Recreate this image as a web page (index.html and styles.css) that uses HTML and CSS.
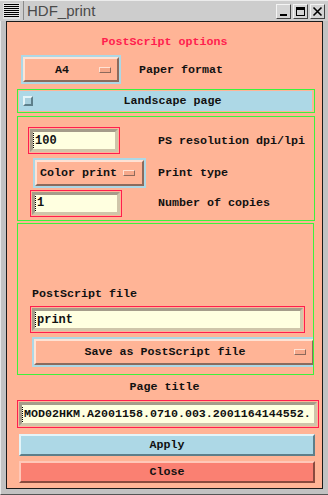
FILE: index.html
```html
<!DOCTYPE html>
<html lang="en">

<head>
    <meta charset="UTF-8">
    <title>HDF_print</title>
    <link rel="stylesheet" href="styles.css">
</head>

<body>

    <div class="window">
        <div class="titlebar">
            <div class="menu-icon"></div>
            <div class="title">HDF_print</div>
            <div class="wm-buttons">
                <div class="wm-btn">
                    <svg width="11" height="11" viewBox="0 0 11 11"><rect x="2" y="8" width="7" height="2" fill="#000"/></svg>
                </div>
                <div class="wm-btn">
                    <svg width="11" height="11" viewBox="0 0 11 11"><rect x="1.5" y="1.5" width="8" height="8" fill="none" stroke="#000"/><rect x="1" y="1" width="9" height="3" fill="#000"/></svg>
                </div>
                <div class="wm-btn">
                    <svg width="11" height="11" viewBox="0 0 11 11"><path d="M1.5 1.5 L9.5 9.5 M9.5 1.5 L1.5 9.5" stroke="#000" stroke-width="1.6"/></svg>
                </div>
            </div>
        </div>

        <div class="panel">
            <div class="heading">PostScript options</div>

            <div class="row paper-row">
                <div class="mb mb-a4">
                    <div class="mb-face">
                        <span class="mb-label">A4</span>
                        <span class="indicator"></span>
                    </div>
                </div>
                <div class="label paper-label">Paper format</div>
            </div>

            <div class="frame landscape">
                <div class="check-row">
                    <span class="checkbox"></span>
                    <span class="check-label">Landscape page</span>
                </div>
            </div>

            <div class="frame options">
                <div class="row opt-row res-row">
                    <div class="cell">
                        <div class="field small-field res-field">
                            <div class="input"><span class="caret"></span>100</div>
                        </div>
                    </div>
                    <div class="label">PS resolution dpi/lpi</div>
                </div>
                <div class="row opt-row type-row">
                    <div class="cell">
                        <div class="mb mb-color">
                            <div class="mb-face">
                                <span class="mb-label">Color print</span>
                                <span class="indicator"></span>
                            </div>
                        </div>
                    </div>
                    <div class="label">Print type</div>
                </div>
                <div class="row opt-row copies-row">
                    <div class="cell">
                        <div class="field small-field copies-field">
                            <div class="input"><span class="caret"></span>1</div>
                        </div>
                    </div>
                    <div class="label">Number of copies</div>
                </div>
            </div>

            <div class="frame file-frame">
                <div class="label file-label">PostScript file</div>
                <div class="field file-field">
                    <div class="input"><span class="caret"></span>print</div>
                </div>
                <div class="mb mb-save">
                    <div class="mb-face">
                        <span class="mb-label">Save as PostScript file</span>
                        <span class="indicator"></span>
                    </div>
                </div>
            </div>

            <div class="page-title">Page title</div>
            <div class="field title-field">
                <div class="input"><span class="caret"></span>MOD02HKM.A2001158.0710.003.2001164144552.</div>
            </div>

            <div class="btn apply">Apply</div>
            <div class="btn close">Close</div>
        </div>
    </div>

</body>

</html>
```

FILE: styles.css
```css
body {
    margin: 0;
    padding: 0;
    background-color: #bdbdbd;
    font-family: "Liberation Mono", monospace;
    font-size: 11.67px;
    font-weight: bold;
    line-height: 14px;
    color: #111;
}

.window {
    width: 328px;
    height: 495px;
    box-sizing: border-box;
    padding: 0 5px 5px 5px;
    background-color: #c2c2c2;
    border-left: 1px solid #e8e8e8;
    border-bottom: 1px solid #555;
    display: flex;
    flex-direction: column;
}

/* title bar */

.titlebar {
    height: 21px;
    margin: 0 -5px 0 -6px;
    display: flex;
    align-items: flex-start;
    background-color: #cdcdcd;
    border-top: 1px solid #ececec;
    box-sizing: border-box;
}

.menu-icon {
    width: 17px;
    height: 16px;
    margin: 2px 0 0 3px;
    background: repeating-linear-gradient(#000 0 1px, #e4e4e4 1px 2px);
    border: 1px solid #e4e4e4;
    box-sizing: border-box;
}

.title {
    font-family: "Liberation Sans", sans-serif;
    font-weight: normal;
    font-size: 15px;
    line-height: 19px;
    color: #4a4a4a;
    margin-left: 3px;
    padding-left: 3px;
    border-left: 1px solid #8a8a8a;
}

.wm-buttons {
    margin-left: auto;
    margin-right: 3px;
    margin-top: 3px;
    display: flex;
    gap: 2px;
}

.wm-btn {
    width: 15px;
    height: 15px;
    box-sizing: border-box;
    border: 1px solid;
    border-color: #f4f4f4 #444 #444 #f4f4f4;
    background-color: #d4d4d4;
    display: flex;
    align-items: center;
    justify-content: center;
}

/* main panel */

.panel {
    flex: 1;
    background-color: #ffb496;
    border: 1px solid #1a1a1a;
    display: flex;
    flex-direction: column;
}

.heading {
    margin-top: 13px;
    text-align: center;
    color: #ff1e4e;
}

.row {
    display: flex;
    align-items: center;
}

.paper-row {
    margin-top: 6px;
    margin-left: 14px;
}

.paper-label {
    margin-left: 18px;
}

/* menu buttons */

.mb {
    border: 2px solid #add8e6;
    box-sizing: border-box;
    height: 30px;
}

.mb-face {
    height: 100%;
    box-sizing: border-box;
    border: 2px solid;
    border-color: #ffe2d4 #8c6a5c #8c6a5c #ffe2d4;
    background-color: #ffb496;
    display: flex;
    align-items: center;
}

.mb-label {
    flex: 1;
    text-align: center;
}

.indicator {
    width: 12px;
    height: 6px;
    box-sizing: border-box;
    border: 1px solid;
    border-color: #ffe2d4 #8c6a5c #8c6a5c #ffe2d4;
    background-color: #f5a88a;
    margin-right: 6px;
}

.mb-a4 {
    width: 100px;
    height: 29px;
}

.mb-color {
    width: 113px;
}

.mb-color .mb-label {
    flex: none;
    margin-left: 3px;
    margin-right: 6px;
}

/* green frames */

.frame {
    margin-left: 10px;
    width: 298px;
    box-sizing: border-box;
    border: 1px solid #3cf23c;
}

.landscape {
    margin-top: 5px;
    height: 24px;
    padding: 1px 2px 1px 1px;
}

.check-row {
    height: 100%;
    background-color: #add8e6;
    display: flex;
    align-items: center;
}

.checkbox {
    width: 10px;
    height: 10px;
    box-sizing: border-box;
    margin-left: 4px;
    border: 2px solid;
    border-color: #e4f4f8 #5d7f8a #5d7f8a #e4f4f8;
    background-color: #a8cfdc;
}

.check-label {
    flex: 1;
    text-align: center;
}

.options {
    margin-top: 3px;
    height: 105px;
    padding-top: 10px;
}

.cell {
    width: 140px;
    flex: none;
}

.res-row {
    height: 27px;
}

.res-field {
    margin-left: 10px;
}

.type-row {
    margin-top: 4px;
    height: 30px;
}

.type-row .mb {
    margin-left: 15px;
}

.copies-row {
    margin-top: 1px;
    height: 28px;
}

.copies-field {
    margin-left: 12px;
    height: 28px;
}

/* entry fields */

.field {
    border: 1px solid #ff1e4e;
    padding: 1px;
    box-sizing: border-box;
    height: 27px;
}

.input {
    height: 100%;
    box-sizing: border-box;
    border: 3px solid;
    border-color: #a59c8a #cfc5aa #cfc5aa #a59c8a;
    background-color: #ffffe0;
    display: flex;
    align-items: center;
    white-space: nowrap;
    overflow: hidden;
    font-size: 12px;
}

.caret {
    display: inline-block;
    width: 0;
    height: 15px;
    border-left: 1px dotted #000;
    margin-right: 1px;
    flex: none;
}

.small-field {
    width: 92px;
}

.file-frame {
    margin-top: 2px;
    width: 297px;
    height: 152px;
    padding-top: 63px;
    overflow: hidden;
}

.file-label {
    margin-left: 14px;
}

.file-field {
    margin-top: 5px;
    margin-left: 12px;
    width: 275px;
}

.mb-save {
    margin-top: 4px;
    margin-left: 14px;
    width: 284px;
}

.page-title {
    margin-top: 5px;
    text-align: center;
}

.title-field {
    margin-top: 6px;
    margin-left: 10px;
    width: 302px;
    height: 28px;
}

.title-field .input {
    font-size: 11.67px;
}

/* push buttons */

.btn {
    margin-left: 12px;
    width: 296px;
    height: 22px;
    box-sizing: border-box;
    border: 2px solid;
    text-align: center;
    line-height: 18px;
}

.apply {
    margin-top: 6px;
    background-color: #add8e6;
    border-color: #e4f4f8 #5d7f8a #5d7f8a #e4f4f8;
}

.close {
    margin-top: 5px;
    background-color: #fa8072;
    border-color: #ffc8b8 #8a4a3e #8a4a3e #ffc8b8;
}
```
